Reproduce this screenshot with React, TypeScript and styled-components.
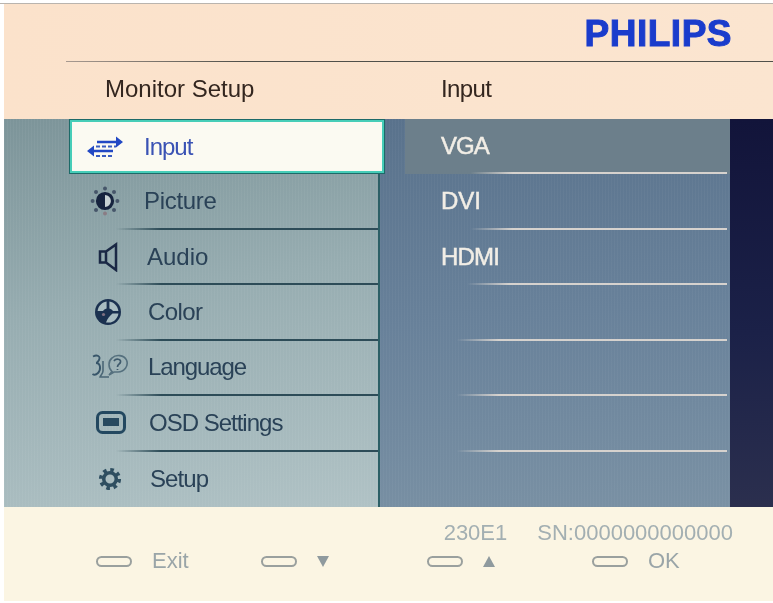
import React from 'react'
import styled, { createGlobalStyle } from 'styled-components'

const GlobalStyle = createGlobalStyle`
  html, body {
    margin: 0;
    padding: 0;
    background: #fff;
  }
  body {
    font-family: "Liberation Sans", Arial, sans-serif;
  }
`

const InputIcon = () => (
  <svg width="36" height="24" viewBox="0 0 36 24">
    <path d="M10 7H31M5 16H26" stroke="#2248c4" strokeWidth="2.6" />
    <path d="M29 1.5L36 7L29 12.5ZM7 10.5L0 16L7 21.5Z" fill="#2248c4" />
    <path d="M9 11.5H29M9 21H27" stroke="#3a5cc0" strokeWidth="2.2" strokeDasharray="4 2" />
  </svg>
)

const PictureIcon = () => (
  <svg width="30" height="30" viewBox="0 0 30 30">
    <circle cx="15" cy="15" r="7.5" fill="#c8d2d4" stroke="#17243f" strokeWidth="3.2" />
    <path d="M15 8A7 7 0 0 0 15 22Z" fill="#17243f" />
    <g fill="#46566a">
      <circle cx="15" cy="2.6" r="2" />
      <circle cx="15" cy="27.4" r="2" fill="#8a7d85" />
      <circle cx="2.6" cy="15" r="2" />
      <circle cx="27.4" cy="15" r="2" />
      <circle cx="6" cy="6" r="2" />
      <circle cx="24" cy="6" r="2" />
      <circle cx="6" cy="24" r="2" />
      <circle cx="24" cy="24" r="2" />
    </g>
  </svg>
)

const AudioIcon = () => (
  <svg width="22" height="30" viewBox="0 0 22 30">
    <path d="M3 9.5H9V20.5H3ZM9 9.5L19 2.5V28L9 20.5" fill="none" stroke="#1a2845" strokeWidth="2.5" />
  </svg>
)

const ColorIcon = () => (
  <svg width="28" height="28" viewBox="0 0 28 28">
    <circle cx="14" cy="14" r="13" fill="#1b3150" />
    <path d="M12.6 3.4V10.5C10.8 11 9.8 11.8 9 13H3.6C4.2 8 8 4 12.6 3.4Z" fill="#a9bcc1" />
    <path d="M15.4 3.4C20 4 23.8 8 24.4 13H19C18.2 11.8 17.2 11 15.4 10.5Z" fill="#a9bcc1" />
    <path d="M12 24.4C13.5 20.5 15.5 18 18.5 15.5H24.4C24 20 19.5 25 14.5 24.6Z" fill="#a9bcc1" />
    <circle cx="9.5" cy="16.5" r="1.6" fill="#7f6f80" />
  </svg>
)

const LanguageIcon = () => (
  <svg width="38" height="28" viewBox="0 0 38 28">
    <path d="M2 3.5C6 1.5 10 3 8 7C7 9 6 10 5 10C10 10 10 17 7 20C5 22 3 22 1.5 21" fill="none" stroke="#38566a" strokeWidth="1.9" />
    <path d="M12 8V18C12 21 9 23 9 24H18" fill="none" stroke="#4a6676" strokeWidth="1.6" />
    <path d="M18 22L21 18.5C17 15 17 8 21 5C25 1 33 2 35.5 7C38 13 33 19 27 19L23 19Z" fill="none" stroke="#55707e" strokeWidth="1.6" />
    <path d="M23 8C25 5 30 6 29.5 9C29 11.5 26.5 11 26.5 14M26.5 16V17" fill="none" stroke="#3f5a6c" strokeWidth="1.7" />
  </svg>
)

const OsdIcon = () => (
  <svg width="30" height="24" viewBox="0 0 30 24">
    <rect x="1.5" y="1.5" width="27" height="20" rx="5" fill="none" stroke="#234860" strokeWidth="3" />
    <rect x="7" y="7" width="16" height="8" fill="#27495f" />
  </svg>
)

const SetupIcon = () => (
  <svg width="24" height="24" viewBox="0 0 26 26">
    <circle cx="13" cy="13" r="10" fill="none" stroke="#2e4e60" strokeWidth="4" strokeDasharray="3.85 4" />
    <circle cx="13" cy="13" r="6.8" fill="none" stroke="#2e4e60" strokeWidth="3.8" />
  </svg>
)

type MenuEntry = {
  label: string;
  icon: React.ReactNode;
  pad: number;
  gap: number;
  track: number;
  selected?: boolean;
};

const menu: MenuEntry[] = [
  {label: 'Input', icon: <InputIcon />, pad: 18, gap: 24, track: -1, selected: true},
  {label: 'Picture', icon: <PictureIcon />, pad: 86, gap: 24, track: -0.3},
  {label: 'Audio', icon: <AudioIcon />, pad: 89, gap: 24, track: 0},
  {label: 'Color', icon: <ColorIcon />, pad: 89, gap: 25, track: -0.6},
  {label: 'Language', icon: <LanguageIcon />, pad: 91, gap: 23, track: -1.1},
  {label: 'OSD Settings', icon: <OsdIcon />, pad: 92, gap: 23, track: -1},
  {label: 'Setup', icon: <SetupIcon />, pad: 91, gap: 25, track: -0.9},
]

const options = [
  {label: 'VGA', fade: 26, track: -1, active: true},
  {label: 'DVI', fade: 26, track: 0},
  {label: 'HDMI', fade: 25, track: -0.8},
  {label: '', fade: 22, track: 0},
  {label: '', fade: 22, track: 0},
  {label: '', fade: 22, track: 0},
  {label: '', fade: 0, track: 0, last: true},
]

const App = () => {
  return (
    <Screen>
      <GlobalStyle />
      <Header>
        <LogoRow>
          <Logo>PHILIPS</Logo>
        </LogoRow>
        <TitleRow>
          <Title $width={336} $pad={39}>Monitor Setup</Title>
          <Title $track={-0.6}>Input</Title>
        </TitleRow>
      </Header>
      <Body>
        <Menu>
          {menu.map((item, i) => (
            <MenuRow
              key={item.label}
              $pad={item.pad}
              $gap={item.gap}
              $selected={item.selected}
              $last={i === menu.length - 1}
            >
              <IconSlot>{item.icon}</IconSlot>
              <MenuLabel $selected={item.selected} $track={item.track}>{item.label}</MenuLabel>
            </MenuRow>
          ))}
        </Menu>
        <Options>
          {options.map((opt, i) => (
            <OptionRow key={i} $fade={opt.fade} $track={opt.track} $active={opt.active} $last={opt.last}>
              {opt.label}
            </OptionRow>
          ))}
        </Options>
        <Strip />
      </Body>
      <Footer>
        <InfoRow>
          <span>230E1</span>
          <span>SN:0000000000000</span>
        </InfoRow>
        <Keys>
          <Key><Pill />Exit</Key>
          <Key><Pill /><Arrow $down /></Key>
          <Key><Pill /><Arrow /></Key>
          <Key><Pill />OK</Key>
        </Keys>
      </Footer>
    </Screen>
  )
}

export default App

const Screen = styled.div`
  width: 773px;
  height: 603px;
  box-sizing: border-box;
  padding: 4px 0 2px 4px;
  overflow: hidden;
  background: #fff;
  box-shadow: inset 0 3px 0 #fff, inset 0 4px 0 #b9b4ae;
  filter: blur(0.45px);
`

const Header = styled.header`
  height: 115px;
  display: flex;
  flex-direction: column;
  background: linear-gradient(to right, #fbe2cb, #fbe5d0);
`

const LogoRow = styled.div`
  height: 57px;
  display: flex;
  justify-content: flex-end;
  align-items: center;
  padding-right: 41px;
  box-sizing: border-box;
`

const Logo = styled.div`
  font-size: 37px;
  font-weight: 700;
  line-height: 1;
  letter-spacing: 0.5px;
  color: #1a3ccc;
  -webkit-text-stroke: 1px #1a3ccc;
  margin-top: 2px;
`

const TitleRow = styled.div`
  flex: 1;
  display: flex;
  align-items: center;
  margin-left: 62px;
  border-top: 1px solid;
  border-image: linear-gradient(to right, #a89a90, #50504a 25%, #50504a) 1;
`

const Title = styled.div<{ $width?: number; $pad?: number; $track?: number }>`
  width: ${p => (p.$width ? `${p.$width}px` : 'auto')};
  padding-left: ${p => p.$pad || 0}px;
  font-size: 24px;
  letter-spacing: ${p => p.$track || 0}px;
  color: #33261f;
  margin-top: -3px;
`

const Body = styled.main`
  height: 388px;
  display: flex;
`

const Menu = styled.nav`
  width: 376px;
  flex: none;
  display: flex;
  flex-direction: column;
  box-sizing: border-box;
  border-right: 2px solid #2c5f66;
  background:
    repeating-linear-gradient(90deg, rgba(255, 255, 255, 0.04) 0 1px, transparent 1px 3px),
    linear-gradient(170deg, #7c9499 0%, #97adb1 45%, #b0c2c5 100%);
`

const MenuRow = styled.div<{ $pad: number; $gap: number; $selected?: boolean; $last?: boolean }>`
  height: 55.43px;
  flex: none;
  display: flex;
  align-items: center;
  box-sizing: border-box;
  padding-left: ${p => p.$pad}px;
  gap: ${p => p.$gap}px;
  ${p => p.$selected ? `
    position: relative;
    z-index: 1;
    height: 53px;
    margin: 1px -6px 1.43px 66px;
    background: #fbfaf2;
    border: 2px solid #46cdb8;
    box-shadow: 0 0 0 1px #1d6a68;
  ` : `
    border-bottom: 2px solid;
    border-image: linear-gradient(to right, transparent 30%, #2d4c58 42%) 1;
  `}
  ${p => (p.$last ? 'border-bottom: 0 none; border-image: none;' : '')}
`

const IconSlot = styled.span`
  width: 30px;
  flex: none;
  display: flex;
  justify-content: center;
  align-items: center;
  svg {
    flex: none;
  }
`

const MenuLabel = styled.span<{ $selected?: boolean; $track: number }>`
  font-size: 24px;
  white-space: nowrap;
  letter-spacing: ${p => p.$track}px;
  color: ${p => (p.$selected ? '#3a52b4' : '#2a4257')};
`

const Options = styled.section`
  flex: 1;
  display: flex;
  flex-direction: column;
  background:
    repeating-linear-gradient(90deg, rgba(255, 255, 255, 0.03) 0 1px, transparent 1px 3px),
    linear-gradient(175deg, #59728c 0%, #68819a 50%, #7a91a4 100%);
`

const OptionRow = styled.div<{ $fade: number; $track: number; $active?: boolean; $last?: boolean }>`
  height: 55.43px;
  flex: none;
  display: flex;
  align-items: center;
  box-sizing: border-box;
  padding-left: 61px;
  font-size: 24px;
  letter-spacing: ${p => p.$track}px;
  color: #f2eee6;
  -webkit-text-stroke: 0.5px #f2eee6;
  background: ${p => (p.$active ? 'linear-gradient(to right, transparent 25px, #6c7f8b 25px)' : 'none')};
  border-bottom: ${p => (p.$last ? '0 none' : '2px solid')};
  border-image: ${p => (p.$last ? 'none' : `linear-gradient(to right, transparent ${p.$fade}%, #d6d2ce ${p.$fade + 12}%, #d6d2ce 99%, transparent 99%) 1`)};
`

const Strip = styled.aside`
  width: 43px;
  flex: none;
  background: linear-gradient(to bottom, #12143a 0%, #1b2148 55%, #2b2f4e 100%);
`

const Footer = styled.footer`
  height: 94px;
  box-sizing: border-box;
  padding-top: 14px;
  background: #fbf5e3;
  color: #9aa5a8;
  font-size: 22px;
`

const InfoRow = styled.div`
  height: 24px;
  line-height: 24px;
  display: flex;
  justify-content: flex-end;
  gap: 30px;
  padding-right: 40px;
  color: #a3afb2;
`

const Keys = styled.div`
  margin-top: 4px;
  padding-left: 92px;
  display: grid;
  grid-template-columns: repeat(4, 165.33px);
  height: 24px;
  line-height: 24px;
`

const Key = styled.div`
  display: flex;
  align-items: center;
  gap: 20px;
`

const Pill = styled.span`
  width: 36px;
  height: 11px;
  box-sizing: border-box;
  border: 2px solid #9aa09e;
  border-radius: 6px;
  flex: none;
`

const Arrow = styled.span<{ $down?: boolean }>`
  width: 0;
  height: 0;
  border-left: 6px solid transparent;
  border-right: 6px solid transparent;
  ${p => (p.$down ? 'border-top: 11px solid #8f9a9e;' : 'border-bottom: 11px solid #8f9a9e;')}
`
